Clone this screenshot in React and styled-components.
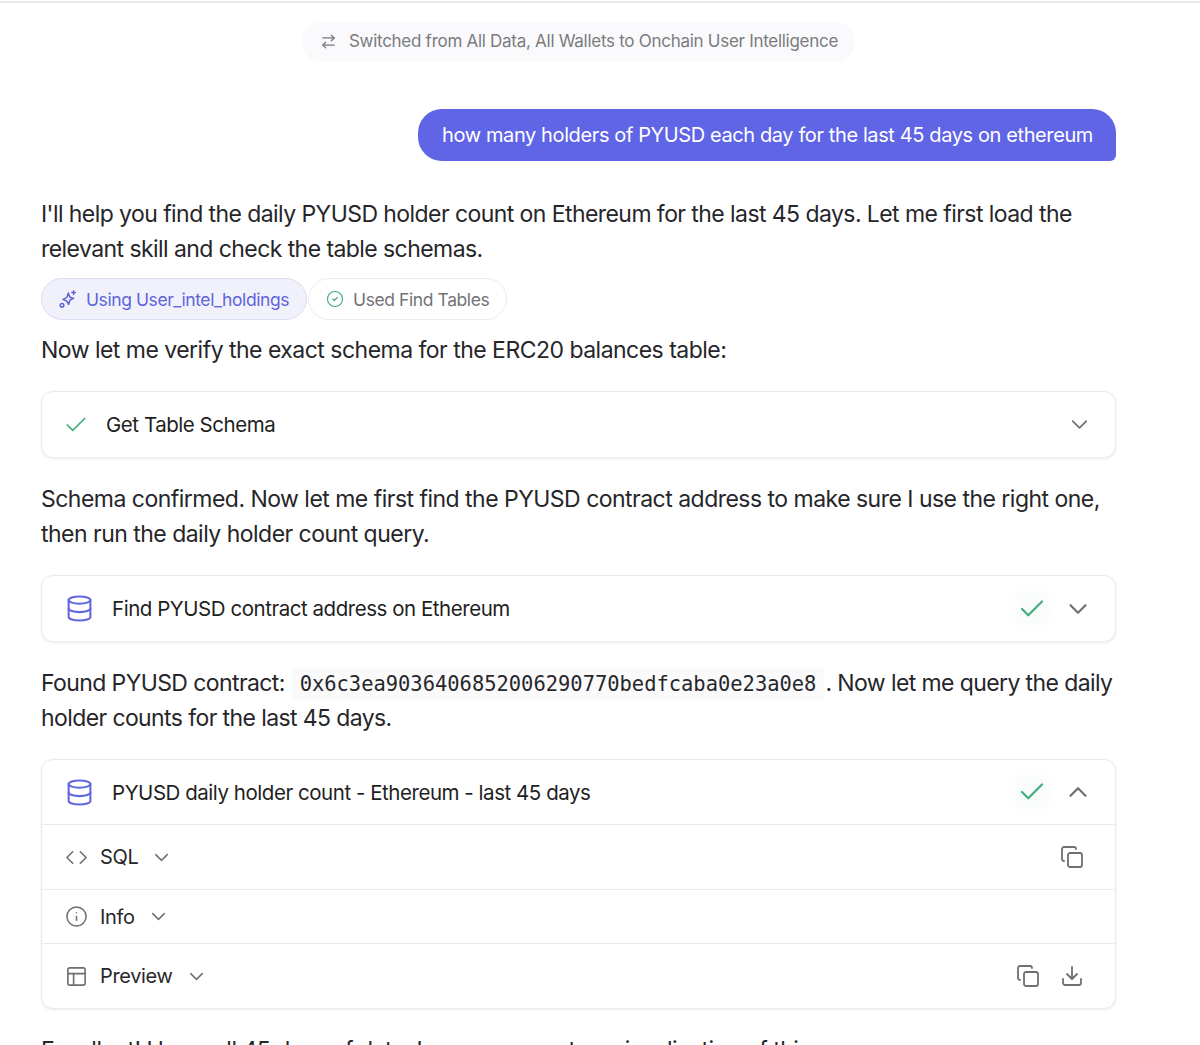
import React from "react";
import styled, { createGlobalStyle } from "styled-components";
import {
  ArrowRightLeft,
  Check,
  ChevronDown,
  ChevronUp,
  CircleCheck,
  Code,
  Copy,
  Database,
  Download,
  Info,
  PanelsTopLeft,
} from "lucide-react";

const GlobalStyle = createGlobalStyle`
  html, body {
    margin: 0;
    padding: 0;
    background: #ffffff;
    height: 1045px;
    overflow: hidden;
  }
  body {
    font-family: Inter, "Liberation Sans", sans-serif;
    color: #1f1f23;
  }
`;

const Page = styled.div`
  height: 1045px;
  overflow: hidden;
  box-sizing: border-box;
  border-top: 2px solid #e9e9eb;
  margin-top: 1px;
  padding: 19px 84px 0 41px;
  display: flex;
  flex-direction: column;

  > * {
    flex-shrink: 0;
  }
`;

const NoticeRow = styled.div`
  display: flex;
  justify-content: center;
`;

const Notice = styled.div`
  height: 40px;
  box-sizing: border-box;
  padding: 0 17px 2px 18px;
  border-radius: 20px;
  background: #fafafc;
  display: flex;
  align-items: center;
  gap: 12px;
  font-size: 17px;
  letter-spacing: -0.28px;
  color: #7a7a80;
  svg { color: #75757a; }
`;

const Bubble = styled.div`
  align-self: flex-end;
  margin-top: 47px;
  height: 52px;
  box-sizing: border-box;
  padding: 0 23px 0 24px;
  display: flex;
  align-items: center;
  background: #6065e6;
  color: #ffffff;
  font-size: 20px;
  letter-spacing: -0.39px;
  border-radius: 24px 24px 6px 24px;
`;

const Paragraph = styled.p`
  margin: ${(p) => p.$top}px 0 0;
  font-size: 23px;
  line-height: 35px;
  letter-spacing: ${(p) => p.$spacing || -0.52}px;
  color: #26262a;
`;

const ChipRow = styled.div`
  display: flex;
  gap: 1px;
  margin-top: 11px;
`;

const Chip = styled.div`
  height: 42px;
  box-sizing: border-box;
  padding: 0 17px;
  display: flex;
  align-items: center;
  gap: 9px;
  border-radius: 21px;
  font-size: 17.5px;
  letter-spacing: -0.42px;
  border: 1px solid ${(p) => (p.$active ? "#dcdcf3" : "#ececef")};
  background: ${(p) => (p.$active ? "#f1f1fc" : "#ffffff")};
  color: ${(p) => (p.$active ? "#6065d8" : "#737378")};
`;

const Address = styled.code`
  font-family: "DejaVu Sans Mono", monospace;
  font-size: 20.45px;
  line-height: 1;
  letter-spacing: 0;
  background: #fafafb;
  padding: 4px 8px;
  margin: 0 1px;
  color: #27272b;
  border-radius: 4px;
`;

const Card = styled.div`
  margin-top: ${(p) => p.$top}px;
  border: 1px solid #ebebed;
  border-radius: 12px;
  background: #ffffff;
  box-shadow: 0 1px 3px rgba(0, 0, 0, 0.08);
`;

const CardHead = styled.div`
  height: ${(p) => p.$height || 65}px;
  box-sizing: border-box;
  display: flex;
  align-items: center;
  padding: ${(p) => p.$pad || "0 22px 0 23px"};
  font-size: 20.5px;
  letter-spacing: -0.46px;
  color: #1f1f23;
`;

const Title = styled.span`
  flex: 1;
  margin-left: ${(p) => p.$left}px;
`;

const Glow = styled.span`
  width: 64px;
  height: 56px;
  margin-right: -1px;
  display: flex;
  align-items: center;
  justify-content: center;
  background: radial-gradient(circle closest-side, #f6faf8 0%, rgba(255, 255, 255, 0) 100%);
`;

const SubRow = styled.div`
  height: ${(p) => p.$height}px;
  box-sizing: border-box;
  border-top: 1px solid #ebebed;
  display: flex;
  align-items: center;
  padding: 0 31px 0 23px;
  font-size: 20px;
  letter-spacing: -0.35px;
  color: #27272b;
`;

const SubLabel = styled.span`
  margin: 0 12px;
`;

const Actions = styled.div`
  margin-left: auto;
  display: flex;
  gap: 20px;
  color: #707074;
`;

const Muted = styled.span`
  display: flex;
  color: #6f6f73;
`;

const SparkIcon = () => (
  <svg width="18" height="18" viewBox="0 0 18 18" fill="none" stroke="#6065d8" strokeWidth="1.5" strokeLinecap="round" strokeLinejoin="round">
    <path d="M9.4 3 L10.8 7 L14.6 8.4 L11 10 L9.6 14.4 L7.6 11 L4 9.4 L7.8 7.4 Z" />
    <path d="M14.6 0.8 V4.4 M12.8 2.6 H16.4" />
    <circle cx="3" cy="15.2" r="1.8" />
  </svg>
);

const App = () => {
  return (
    <>
      <GlobalStyle />
      <Page>
        <NoticeRow>
          <Notice>
            <ArrowRightLeft size={17} strokeWidth={1.7} />
            Switched from All Data, All Wallets to Onchain User Intelligence
          </Notice>
        </NoticeRow>

        <Bubble>how many holders of PYUSD each day for the last 45 days on ethereum</Bubble>

        <Paragraph $top={36} $spacing={-0.57}>
          I'll help you find the daily PYUSD holder count on Ethereum for the last 45 days. Let me first load the
          relevant skill and check the table schemas.
        </Paragraph>

        <ChipRow>
          <Chip $active>
            <SparkIcon />
            Using User_intel_holdings
          </Chip>
          <Chip>
            <CircleCheck size={18} strokeWidth={1.5} color="#3fa878" />
            Used Find Tables
          </Chip>
        </ChipRow>

        <Paragraph $top={13}>Now let me verify the exact schema for the ERC20 balances table:</Paragraph>

        <Card $top={23}>
          <CardHead $pad="0 22px 0 21px">
            <Check size={26} strokeWidth={1.6} color="#45ad80" />
            <Title $left={17}>Get Table Schema</Title>
            <Muted>
              <ChevronDown size={27} strokeWidth={1.5} />
            </Muted>
          </CardHead>
        </Card>

        <Paragraph $top={24}>
          Schema confirmed. Now let me first find the PYUSD contract address to make sure I use the right one, then
          run the daily holder count query.
        </Paragraph>

        <Card $top={23}>
          <CardHead>
            <Database size={29} strokeWidth={1.7} color="#6065e0" />
            <Title $left={18}>Find PYUSD contract address on Ethereum</Title>
            <Glow>
              <Check size={30} strokeWidth={1.8} color="#45ad80" />
            </Glow>
            <Muted>
              <ChevronDown size={30} strokeWidth={1.7} />
            </Muted>
          </CardHead>
        </Card>

        <Paragraph $top={24} $spacing={-0.6}>
          Found PYUSD contract: <Address>0x6c3ea9036406852006290770bedfcaba0e23a0e8</Address>. Now let me query the
          daily holder counts for the last 45 days.
        </Paragraph>

        <Card $top={23}>
          <CardHead $height={64}>
            <Database size={29} strokeWidth={1.7} color="#6065e0" />
            <Title $left={18}>PYUSD daily holder count - Ethereum - last 45 days</Title>
            <Glow>
              <Check size={30} strokeWidth={1.8} color="#45ad80" />
            </Glow>
            <Muted>
              <ChevronUp size={30} strokeWidth={1.7} />
            </Muted>
          </CardHead>
          <SubRow $height={65}>
            <Muted>
              <Code size={23} strokeWidth={1.7} />
            </Muted>
            <SubLabel>SQL</SubLabel>
            <Muted>
              <ChevronDown size={23} strokeWidth={1.5} />
            </Muted>
            <Actions>
              <Copy size={24} strokeWidth={1.8} />
            </Actions>
          </SubRow>
          <SubRow $height={54}>
            <Muted>
              <Info size={23} strokeWidth={1.6} />
            </Muted>
            <SubLabel>Info</SubLabel>
            <Muted>
              <ChevronDown size={23} strokeWidth={1.5} />
            </Muted>
          </SubRow>
          <SubRow $height={65}>
            <Muted>
              <PanelsTopLeft size={23} strokeWidth={1.7} />
            </Muted>
            <SubLabel>Preview</SubLabel>
            <Muted>
              <ChevronDown size={23} strokeWidth={1.5} />
            </Muted>
            <Actions>
              <Copy size={24} strokeWidth={1.8} />
              <Download size={24} strokeWidth={1.8} />
            </Actions>
          </SubRow>
        </Card>

        <Paragraph $top={24}>Excellent! I have all 45 days of data. I can now create a visualization of this</Paragraph>
      </Page>
    </>
  );
};

export default App;
